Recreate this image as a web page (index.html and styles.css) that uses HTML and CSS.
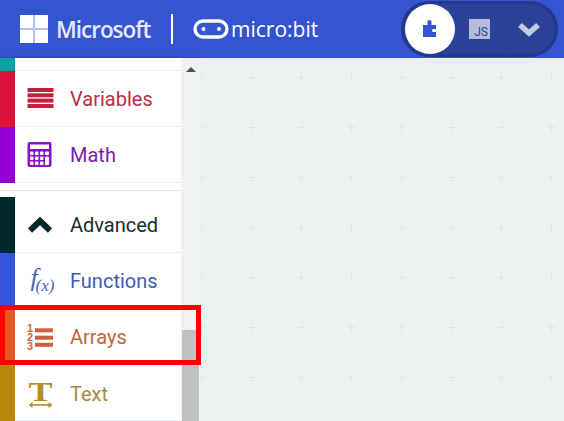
FILE: index.html
```html
<!DOCTYPE html>
<html lang="en">
  <head>
    <meta charset="UTF-8" />
    <meta name="viewport" content="width=device-width, initial-scale=1.0" />
    <title>micro:bit editor</title>
    <link rel="stylesheet" href="styles.css">
  </head>
  <body>
    <header class="topbar">
      <svg class="ms-logo" width="28" height="28" viewBox="0 0 28 28">
        <rect width="28" height="28" fill="#b4bfea" />
        <rect width="13" height="13" fill="#fff" />
        <rect x="15" width="13" height="13" fill="#fff" />
        <rect y="15" width="13" height="13" fill="#fff" />
        <rect x="15" y="15" width="13" height="13" fill="#fff" />
      </svg>
      <span class="ms-name">Microsoft</span>
      <span class="brand-divider"></span>
      <svg class="mb-logo" width="36" height="20" viewBox="0 0 36 20">
        <rect x="2" y="2" width="32" height="16" rx="8" fill="none" stroke="#fff" stroke-width="3.4" />
        <circle cx="10.500" cy="10" r="2" fill="#fff" />
        <circle cx="26" cy="10" r="2" fill="#fff" />
      </svg>
      <span class="mb-name">micro:bit</span>

      <div class="toggle">
        <div class="toggle-blocks">
          <svg width="16" height="18" viewBox="0 0 16 18">
            <path d="M1 5h4.500V1.500Q5.500 0 7.500 0t2 1.500V5H14v4h-2.500q-1.500 0-1.500 1.500t1.500 1.500H14v5H1z" fill="#3454d1" />
          </svg>
        </div>
        <div class="toggle-js"><span>JS</span></div>
        <div class="toggle-more">
          <svg width="24" height="16" viewBox="0 0 24 16">
            <polyline points="3,4 12,12 21,4" fill="none" stroke="#c4cbe6" stroke-width="5.500" />
          </svg>
        </div>
      </div>
    </header>

    <main class="editor">
      <aside class="toolbox">
        <div class="categories">
          <div class="cat cat-stub"><span class="strip strip-teal"></span></div>

          <div class="cat cat-variables">
            <span class="strip"></span>
            <svg class="cat-icon" width="28" height="25" viewBox="0 0 28 25">
              <rect x="0.500" y="2" width="26" height="4" />
              <rect x="0.500" y="7.300" width="26" height="4" />
              <rect x="0.500" y="12.600" width="26" height="4" />
              <rect x="0.500" y="18" width="26" height="4" />
            </svg>
            <span class="cat-label">Variables</span>
          </div>

          <div class="cat cat-math">
            <span class="strip"></span>
            <svg class="cat-icon" width="28" height="27" viewBox="0 0 28 27">
              <rect x="0.500" y="1" width="24" height="25" rx="2" />
              <rect x="3" y="3.500" width="19" height="4.500" fill="#fff" />
              <rect x="3" y="10.500" width="3.500" height="3.500" rx="1" fill="#fff" />
              <rect x="8" y="10.500" width="3.500" height="3.500" rx="1" fill="#fff" />
              <rect x="13" y="10.500" width="3.500" height="3.500" rx="1" fill="#fff" />
              <rect x="18" y="10.500" width="4" height="3.500" rx="1" fill="#fff" />
              <rect x="3" y="15.500" width="3.500" height="3.500" rx="1" fill="#fff" />
              <rect x="8" y="15.500" width="3.500" height="3.500" rx="1" fill="#fff" />
              <rect x="13" y="15.500" width="3.500" height="3.500" rx="1" fill="#fff" />
              <rect x="3" y="20.500" width="3.500" height="3.500" rx="1" fill="#fff" />
              <rect x="8" y="20.500" width="3.500" height="3.500" rx="1" fill="#fff" />
              <rect x="13" y="20.500" width="3.500" height="3.500" rx="1" fill="#fff" />
              <rect x="18" y="15.500" width="4" height="8.500" rx="1" fill="#fff" />
            </svg>
            <span class="cat-label">Math</span>
          </div>

          <div class="cat-gap"></div>

          <div class="cat cat-advanced">
            <span class="strip"></span>
            <svg class="cat-icon" width="28" height="19" viewBox="0 0 28 19">
              <polyline points="3,15.500 13,6 23,15.500" fill="none" stroke="#00272b" stroke-width="6" />
            </svg>
            <span class="cat-label">Advanced</span>
          </div>

          <div class="cat cat-functions">
            <span class="strip"></span>
            <svg class="cat-icon" width="28" height="31" viewBox="0 0 28 31">
              <text class="fx-f" x="3.500" y="21">f</text>
              <text class="fx-x" x="8.500" y="26">(x)</text>
            </svg>
            <span class="cat-label">Functions</span>
          </div>

          <div class="cat cat-arrays">
            <span class="strip"></span>
            <svg class="cat-icon" width="28" height="29" viewBox="0 0 28 29">
              <text class="num"><tspan x="0" y="9.500">1</tspan><tspan x="0" y="19">2</tspan><tspan x="0" y="28">3</tspan></text>
              <rect x="8" y="6.300" width="18" height="4" />
              <rect x="8" y="13.700" width="18" height="4" />
              <rect x="8" y="20.800" width="18" height="4" />
            </svg>
            <span class="cat-label">Arrays</span>
          </div>

          <div class="cat cat-text">
            <span class="strip"></span>
            <svg class="cat-icon" width="28" height="33" viewBox="0 0 28 33">
              <text class="big-t" x="1.500" y="25" textLength="24" lengthAdjust="spacingAndGlyphs">T</text>
              <rect x="3" y="28.200" width="21" height="1.600" />
              <polygon points="1.500,29 5.500,26 5.500,32" />
              <polygon points="25.500,29 21.500,26 21.500,32" />
            </svg>
            <span class="cat-label">Text</span>
          </div>
        </div>

        <div class="scrollbar">
          <span class="scroll-up"></span>
          <span class="scroll-thumb"></span>
        </div>
      </aside>

      <section class="workspace">
        <svg class="workspace-grid" width="363" height="363">
          <defs>
            <pattern id="grid" x="25" y="-6" width="50" height="50" patternUnits="userSpaceOnUse">
              <rect x="21" y="25" width="9" height="1" fill="#e0e4e6" />
              <rect x="25" y="21" width="1" height="9" fill="#e0e4e6" />
            </pattern>
          </defs>
          <rect width="363" height="363" fill="url(#grid)" />
        </svg>
      </section>

      <div class="highlight"></div>
    </main>
  </body>
</html>
```

FILE: styles.css
```css
* {
  box-sizing: border-box;
}

html,
body {
  margin: 0;
  height: 100%;
  overflow: hidden;
}

body {
  font-family: Roboto, "Liberation Sans", sans-serif;
  background-color: #ecf0f1;
}

/* top bar */
.topbar {
  display: flex;
  align-items: center;
  height: 58px;
  padding-left: 20px;
  background-color: #3454d1;
  color: #fff;
}

.ms-logo {
  flex: none;
}

.ms-name {
  width: 95px;
  margin-left: 8px;
  font-family: "Open Sans", sans-serif;
  font-size: 22.500px;
  font-weight: 600;
  letter-spacing: -1px;
  white-space: nowrap;
  color: #e6e9f9;
}

.brand-divider {
  width: 2px;
  height: 30px;
  margin-left: 20px;
  background-color: #fff;
}

.mb-logo {
  flex: none;
  margin-left: 20px;
}

.mb-name {
  margin-left: 2px;
  font-family: "Open Sans", sans-serif;
  font-size: 21px;
  font-weight: 500;
}

/* blocks / js toggle */
.toggle {
  display: flex;
  align-items: center;
  width: 157px;
  height: 56px;
  margin-left: auto;
  margin-right: 6px;
  border: 3px solid #23398e;
  border-radius: 28px;
  background-color: #2a4399;
}

.toggle-blocks {
  display: flex;
  align-items: center;
  justify-content: center;
  width: 50px;
  height: 50px;
  margin-left: 1px;
  border-radius: 50%;
  background-color: #fff;
}

.toggle-js {
  display: flex;
  align-items: flex-end;
  justify-content: flex-end;
  width: 21px;
  height: 20px;
  margin-left: 14px;
  padding: 0 2px 1px 0;
  background-color: #b4bbdb;
  color: #2a4399;
  font-size: 12px;
  line-height: 1;
}

.toggle-more {
  display: flex;
  align-items: center;
  justify-content: center;
  flex: 1;
  height: 100%;
  margin-left: 15px;
  padding-right: 3px;
  border-left: 1px solid #283f92;
}

/* main area */
.editor {
  position: relative;
  display: flex;
  height: 363px;
}

.toolbox {
  display: flex;
  flex: none;
  width: 201px;
  box-shadow: 1px 0 3px rgba(0, 0, 0, 0.3);
}

.categories {
  flex: none;
  width: 181px;
  background-color: #fff;
}

.cat {
  display: flex;
  align-items: center;
  height: 56px;
  border-bottom: 1px solid #e9eef2;
}

.cat-stub {
  height: 13px;
}

.cat-gap {
  height: 14px;
  background: linear-gradient(#e4e6e8, #e4e6e8) 0 7px / 100% 1px no-repeat;
}

.strip {
  flex: none;
  align-self: stretch;
  width: 15px;
  margin-bottom: -1px;
}

.strip-teal {
  background-color: #00a4a6;
}

.cat-icon {
  flex: none;
  margin-left: 12px;
  overflow: visible;
}

.cat-label {
  margin-left: 15px;
  font-size: 20px;
}

.cat-variables .strip {
  background-color: #dc143c;
}

.cat-variables .cat-icon {
  fill: #c1203f;
}

.cat-variables .cat-label {
  color: #b52f4b;
}

.cat-math .strip {
  background-color: #9400d3;
}

.cat-math .cat-icon {
  fill: #8a12c2;
}

.cat-math .cat-label {
  color: #7a1fa6;
}

.cat-advanced .strip {
  background-color: #00272b;
}

.cat-advanced .cat-label {
  color: #12302f;
}

.cat-functions .strip {
  background-color: #3455db;
}

.cat-functions .cat-label {
  color: #4259b3;
}

.fx-f,
.fx-x {
  font-family: "Liberation Serif", serif;
  font-style: italic;
  fill: #4a62bd;
}

.fx-f {
  font-size: 26px;
}

.fx-x {
  font-size: 17px;
}

.cat-arrays .strip {
  background-color: #e65722;
}

.cat-arrays .cat-icon {
  fill: #cc6239;
}

.cat-arrays .cat-label {
  color: #c4623c;
}

.num {
  font-family: "Liberation Sans", sans-serif;
  font-size: 11px;
  font-weight: 700;
}

.cat-text .strip {
  background-color: #b8860b;
}

.cat-text .cat-icon {
  fill: #b58e2a;
}

.cat-text .cat-label {
  margin-top: 2px;
  color: #a8893c;
}

.big-t {
  font-family: "Liberation Serif", serif;
  font-size: 27px;
  font-weight: 700;
}

.scrollbar {
  display: flex;
  flex-direction: column;
  align-items: center;
  flex: none;
  width: 20px;
  background-color: #f1f1f1;
}

.scroll-up {
  width: 0;
  height: 0;
  margin-top: 9px;
  border-left: 5px solid transparent;
  border-right: 5px solid transparent;
  border-bottom: 5px solid #505050;
}

.scroll-thumb {
  width: 17px;
  height: 91px;
  margin-top: 258px;
  margin-right: 1px;
  background-color: #c1c1c1;
}

.workspace {
  flex: 1;
  background-color: #ecf0f1;
}

.workspace-grid {
  display: block;
}

/* red callout drawn over the list */
.highlight {
  position: absolute;
  left: 0;
  top: 247px;
  width: 201px;
  height: 60px;
  border: 5px solid #f00;
}
```
